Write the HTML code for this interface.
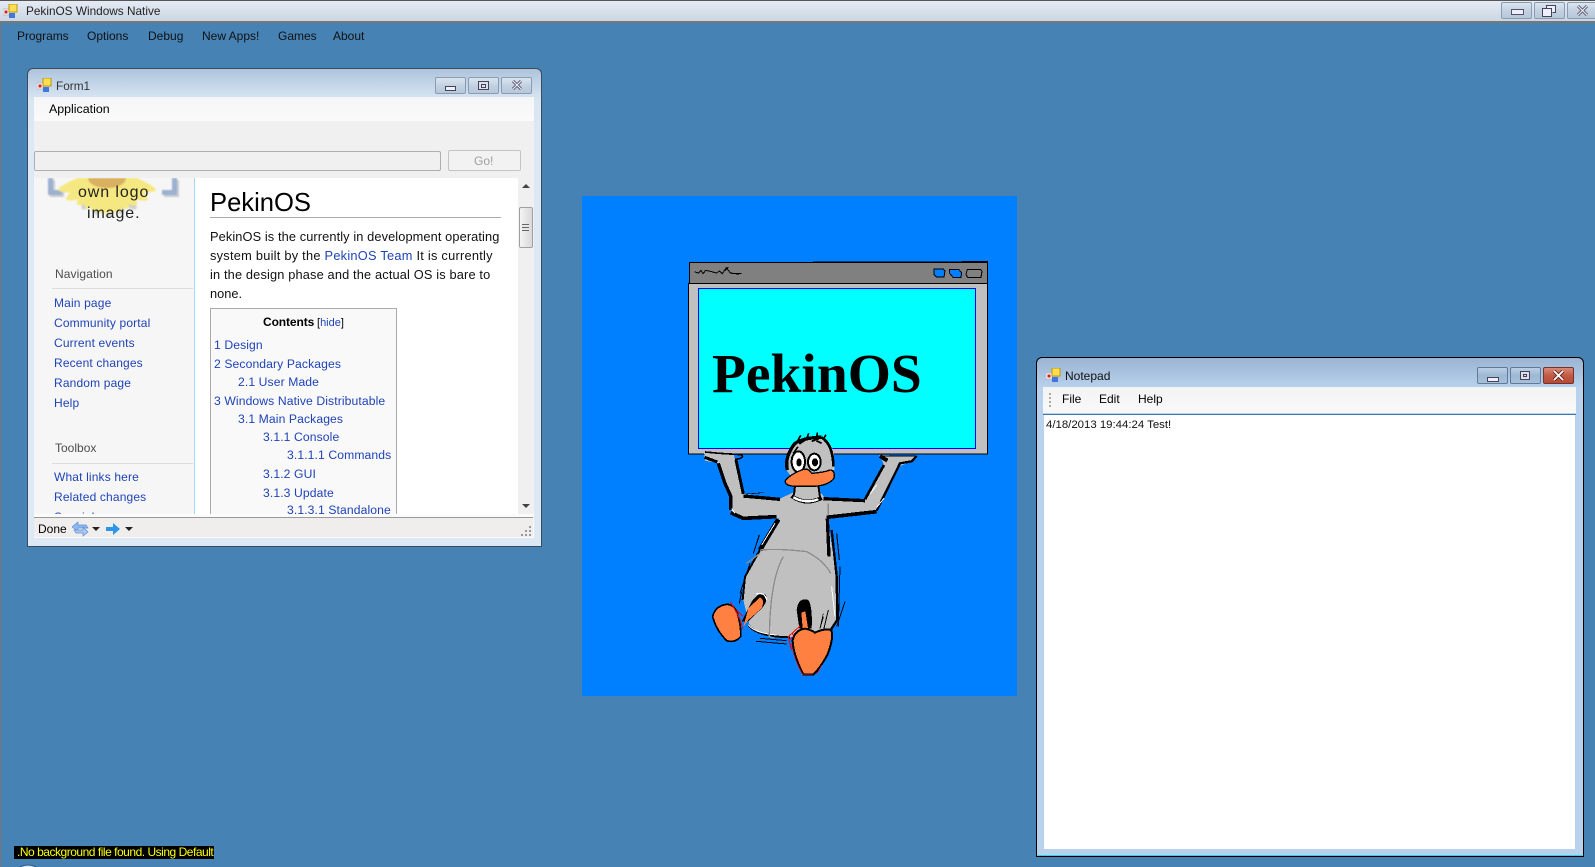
<!DOCTYPE html>
<html><head><meta charset="utf-8"><title>PekinOS Windows Native</title>
<style>
html,body{margin:0;padding:0}
body{width:1595px;height:867px;position:relative;overflow:hidden;background:#4682b4;font-family:"Liberation Sans",Arial,sans-serif;font-size:12px;color:#111}
div,span,a,svg{position:absolute}
.t{white-space:nowrap;line-height:16px}
.l{color:#1f43b8;white-space:nowrap;line-height:16px;position:absolute;letter-spacing:.15px}
.b{font-size:12.8px;line-height:19px;white-space:nowrap;color:#111;left:210px}
.b a{position:static;color:#1f43b8}
.c{font-size:12.16px;letter-spacing:.1px}
.btn{box-sizing:border-box;height:17px;width:31px;border:1px solid #8a9cb4;border-radius:2px;background:linear-gradient(#dbe5f0,#c3d2e2 50%,#b7c8da)}
.nb{background:linear-gradient(#bdd0e6,#9db7d4 50%,#a6c0dc);border-color:#607a98}
</style></head><body>

<!-- main window -->
<div style="left:0;top:0;width:1595px;height:23px;background:linear-gradient(#e4ebf3,#cbd7e3);border-top:1px solid #555;box-sizing:border-box;border-bottom:2px solid #777"></div>
<div style="left:0;top:23px;width:1px;height:844px;background:#777"></div>
<svg style="left:3px;top:4px" width="15" height="14" viewBox="0 0 15 14"><rect x="0" y="5" width="6" height="6" fill="#fff" stroke="#bbb"/><rect x="1.5" y="6.5" width="3" height="3" fill="#c22"/><rect x="6" y="0" width="8" height="8" fill="#fd5" stroke="#b90"/><rect x="6" y="9" width="6" height="5" fill="#47d"/></svg>
<span class="t" style="left:26px;top:3px;font-size:11.8px;color:#222">PekinOS Windows Native</span>
<div class="btn" style="left:1501px;top:2px"></div><div style="left:1511px;top:9px;width:11px;height:4px;border:1px solid #556;background:#eef"></div>
<div class="btn" style="left:1534px;top:2px"></div><svg style="left:1542px;top:5px" width="14" height="12"><path d="M4.5 3.5V.5h9v7h-3M.5 3.5h9v8h-9z" fill="#eef" stroke="#445"/></svg>
<div class="btn" style="left:1567px;top:2px;width:32px"></div><svg style="left:1576px;top:5px" width="13" height="11"><path d="M2 1l9 9M11 1l-9 9" stroke="#556" stroke-width="3"/><path d="M2 1l9 9M11 1l-9 9" stroke="#eef" stroke-width="1.2"/></svg>
<span class="t" style="left:17px;top:28px;letter-spacing:-.05px">Programs</span>
<span class="t" style="left:87px;top:28px">Options</span>
<span class="t" style="left:148px;top:28px">Debug</span>
<span class="t" style="left:202px;top:28px">New Apps!</span>
<span class="t" style="left:278px;top:28px">Games</span>
<span class="t" style="left:333px;top:28px">About</span>

<!-- Form1 -->
<div style="left:27px;top:68px;width:515px;height:479px;box-sizing:border-box;border:1px solid #3b4a5c;border-radius:6px 6px 0 0;background:linear-gradient(#aec4dc 0,#d8e5f2 30px,#dce8f4 60px)"></div>
<svg style="left:37px;top:78px" width="15" height="14" viewBox="0 0 15 14"><rect x="0" y="5" width="6" height="6" fill="#fff" stroke="#bbb"/><rect x="1.5" y="6.5" width="3" height="3" fill="#c22"/><rect x="6" y="0" width="8" height="8" fill="#fd5" stroke="#b90"/><rect x="6" y="9" width="6" height="5" fill="#47d"/></svg>
<span class="t" style="left:56px;top:78px;color:#333;font-size:11.8px">Form1</span>
<div class="btn" style="left:435px;top:77px"></div><div style="left:445px;top:86px;width:9px;height:3px;border:1px solid #445;background:#eef"></div>
<div class="btn" style="left:468px;top:77px"></div><div style="left:478px;top:81px;width:9px;height:7px;border:1px solid #445;background:#dde"></div><div style="left:481px;top:84px;width:3px;height:2px;border:1px solid #445"></div>
<div class="btn" style="left:501px;top:77px"></div><svg style="left:511px;top:80px" width="12" height="10"><path d="M2 1l8 8M10 1l-8 8" stroke="#556" stroke-width="3"/><path d="M2 1l8 8M10 1l-8 8" stroke="#eef" stroke-width="1.2"/></svg>
<div style="left:34px;top:97px;width:500px;height:24px;background:linear-gradient(#f6f6f6,#fafafa)"></div>
<div style="left:34px;top:121px;width:500px;height:57px;background:#f0f0f0"></div>
<span class="t" style="left:49px;top:101px;color:#000;font-size:12.4px">Application</span>
<div style="left:34px;top:151px;width:407px;height:20px;box-sizing:border-box;border:1px solid #aeaeae;border-radius:2px;background:#f0f0f0"></div>
<div style="left:448px;top:150px;width:73px;height:21px;box-sizing:border-box;border:1px solid #c4c4c4;border-radius:2px;background:#f2f2f2"></div>
<span class="t" style="left:474px;top:153px;color:#a0a0a0">Go!</span>

<!-- browser -->
<div style="left:34px;top:178px;width:500px;height:336px;overflow:hidden;background:#fff">
  <div style="left:0;top:0;width:160px;height:336px;background:#f6f6f6;border-right:1px solid #a7d7f9"></div>
  <svg style="left:0;top:0;filter:blur(.7px)" width="160" height="50">
    <g fill="#c9ccd2" transform="translate(2 2)"><path d="M14 0h5v12h9v5H14zM143 0h-5v12h-10v5h15z"/></g>
    <path d="M14 0h5v12h9v5H14zM143 0h-5v12h-10v5h15z" fill="#9db0cf"/>
    <g fill="#d2d2cc" transform="translate(2 3)">
      <path d="M62 0Q73 72 84 0z"/>
      <path d="M62 0Q73 72 84 0z" transform="rotate(-22 73 0)"/><path d="M62 0Q73 72 84 0z" transform="rotate(22 73 0)"/>
      <path d="M62 0Q73 78 84 0z" transform="rotate(-44 73 0)"/><path d="M62 0Q73 78 84 0z" transform="rotate(44 73 0)"/>
    </g>
    <g fill="#f5e880">
      <path d="M62 0Q73 72 84 0z"/>
      <path d="M62 0Q73 72 84 0z" transform="rotate(-11 73 0)"/><path d="M62 0Q73 72 84 0z" transform="rotate(11 73 0)"/>
      <path d="M62 0Q73 72 84 0z" transform="rotate(-23 73 0)"/><path d="M62 0Q73 72 84 0z" transform="rotate(23 73 0)"/>
      <path d="M62 0Q73 74 84 0z" transform="rotate(-35 73 0)"/><path d="M62 0Q73 74 84 0z" transform="rotate(35 73 0)"/>
      <path d="M62 0Q73 80 84 0z" transform="rotate(-48 73 0)"/><path d="M62 0Q73 80 84 0z" transform="rotate(48 73 0)"/>
      <path d="M62 0Q73 92 84 0z" transform="rotate(-62 73 0)"/><path d="M62 0Q73 92 84 0z" transform="rotate(62 73 0)"/>
      <path d="M62 0Q73 100 84 0z" transform="rotate(-76 73 0)"/><path d="M62 0Q73 100 84 0z" transform="rotate(76 73 0)"/>
    </g>
    <ellipse cx="73" cy="0" rx="19" ry="10" fill="#d9b060"/>
  </svg>
  <span class="t" style="left:44px;top:7px;font-size:16px;color:#222;letter-spacing:.9px">own logo</span>
  <span class="t" style="left:53px;top:28px;font-size:16px;color:#222;letter-spacing:.9px">image.</span>
  <span class="t" style="left:21px;top:88px;color:#4d4d4d;letter-spacing:.1px">Navigation</span>
  <div style="left:18px;top:110px;width:141px;height:1px;background:#ddd"></div>
  <span class="l" style="left:20px;top:117px">Main page</span>
  <span class="l" style="left:20px;top:137px">Community portal</span>
  <span class="l" style="left:20px;top:157px">Current events</span>
  <span class="l" style="left:20px;top:177px">Recent changes</span>
  <span class="l" style="left:20px;top:197px">Random page</span>
  <span class="l" style="left:20px;top:217px">Help</span>
  <span class="t" style="left:21px;top:262px;color:#4d4d4d">Toolbox</span>
  <div style="left:18px;top:285px;width:141px;height:1px;background:#ddd"></div>
  <span class="l" style="left:20px;top:291px">What links here</span>
  <span class="l" style="left:20px;top:311px">Related changes</span>
  <span class="l" style="left:20px;top:331px">Special pages</span>

  <span class="t" style="left:176px;top:9px;font-size:25.6px;line-height:32px;color:#000">PekinOS</span>
  <div style="left:176px;top:39px;width:291px;height:1px;background:#aaa"></div>
  <span class="b" style="left:176px;top:49px;letter-spacing:.1px">PekinOS is the currently in development operating</span>
  <span class="b" style="left:176px;top:68px;letter-spacing:.25px">system built by the <a>PekinOS Team</a> It is currently</span>
  <span class="b" style="left:176px;top:87px;letter-spacing:.15px">in the design phase and the actual OS is bare to</span>
  <span class="b" style="left:176px;top:106px">none.</span>
  <div style="left:176px;top:130px;width:187px;height:220px;box-sizing:border-box;border:1px solid #aaa;background:#f9f9f9"></div>
  <span class="t" style="left:229px;top:136px;font-weight:bold;color:#000;letter-spacing:-.1px">Contents</span>
  <span class="t" style="left:283px;top:137px;font-size:11px;color:#000">[<a style="position:static;color:#1f43b8">hide</a>]</span>
  <span class="l c" style="left:180px;top:159px">1 Design</span>
  <span class="l c" style="left:180px;top:178px">2 Secondary Packages</span>
  <span class="l c" style="left:204px;top:196px">2.1 User Made</span>
  <span class="l c" style="left:180px;top:215px">3 Windows Native Distributable</span>
  <span class="l c" style="left:204px;top:233px">3.1 Main Packages</span>
  <span class="l c" style="left:229px;top:251px">3.1.1 Console</span>
  <span class="l c" style="left:253px;top:269px">3.1.1.1 Commands</span>
  <span class="l c" style="left:229px;top:288px">3.1.2 GUI</span>
  <span class="l c" style="left:229px;top:307px">3.1.3 Update</span>
  <span class="l c" style="left:253px;top:324px">3.1.3.1 Standalone</span>
  <!-- scrollbar -->
  <div style="left:484px;top:0;width:16px;height:336px;background:#f0f0f0"></div>
  <div style="left:485px;top:29px;width:14px;height:41px;box-sizing:border-box;border:1px solid #a0a0a0;border-radius:2px;background:linear-gradient(90deg,#f4f4f4,#d8d8d8)"></div>
  <div style="left:488px;top:46px;width:7px;height:7px;background:repeating-linear-gradient(#666 0 1px,#e8e8e8 1px 3px)"></div>
  <svg style="left:488px;top:5px" width="8" height="6"><path d="M4 1L8 5H0z" fill="#444"/></svg>
  <svg style="left:488px;top:325px" width="8" height="6"><path d="M4 5L8 1H0z" fill="#444"/></svg>
</div>

<!-- status bar -->
<div style="left:34px;top:514px;width:500px;height:24px;background:#fbfbfb"></div>
<div style="left:34px;top:517px;width:499px;height:20px;box-sizing:border-box;border-top:1px solid #999;background:#f0eded"></div>
<span class="t" style="left:38px;top:521px;color:#000">Done</span>
<svg style="left:72px;top:521px" width="64" height="16">
  <path d="M0 6l6-5v3h8l2 3H6v3z" fill="#8fb8ee" stroke="#5d8fd6" stroke-width=".7"/>
  <path d="M16 11l-5 4v-3H4l-2-3h9V6z" fill="#a9c8f2" stroke="#5d8fd6" stroke-width=".7"/>
  <path d="M20 6h8l-4 4z" fill="#222"/>
  <path d="M34 6h7V2l7 6-7 6v-4h-7z" fill="#2d96e8"/>
  <path d="M53 6h8l-4 4z" fill="#222"/>
</svg>
<svg style="left:521px;top:526px" width="11" height="10" fill="#999"><rect x="8" y="0" width="2" height="2"/><rect x="4" y="4" width="2" height="2"/><rect x="8" y="4" width="2" height="2"/><rect x="0" y="8" width="2" height="2"/><rect x="4" y="8" width="2" height="2"/><rect x="8" y="8" width="2" height="2"/></svg>

<!-- duck image -->
<div style="left:582px;top:196px;width:435px;height:500px;background:#007fff"></div>
<svg style="left:0;top:0" width="1595" height="867" shape-rendering="crispEdges">
 <g transform="translate(660 240) scale(.33333)">
  <path d="M88 68L982 65V642H85V130H88z" fill="#c0c0c0" stroke="#000" stroke-width="3"/>
  <rect x="88" y="67" width="894" height="63" fill="#808080" stroke="#000" stroke-width="3"/>
  <rect x="115" y="146" width="831" height="479" fill="#00ffff" stroke="#0000ff" stroke-width="3"/>
  <path d="M103 95l12 4 8-8 6 10 8-10 18 4 14 4 10-6 8 8 12-18 12 16 16 2 10 2M115 100l8-8M195 92l10-10M215 100h30" fill="none" stroke="#000" stroke-width="3"/>
  <path d="M822 87h28l5 6-3 18h-22l-8-8z M868 88h28l9 10-2 14h-24l-10-12z" fill="#007fff" stroke="#000" stroke-width="3"/>
  <path d="M922 88h40l4 6-3 18h-40l-5-8z" fill="#808080" stroke="#000" stroke-width="3"/>
 </g>
 <g transform="translate(680 420) scale(.33333)">
  <!-- body -->
  <path d="M72 95L160 100 195 222 300 236 345 215 418 215 440 238 550 240 610 130 598 105 710 108 695 124 655 140 590 272 442 290 470 470 470 600 445 640 330 652 270 652 210 622 190 540 190 480 238 390 298 296 190 295 155 275 150 220 115 130 75 122z" fill="#c0c0c0"/>
  <g fill="none" stroke="#000">
   <!-- left hand -->
   <path d="M75 96L118 100 185 104M185 104Q195 115 165 118" stroke-width="5"/>
   <path d="M74 112L112 126" stroke-width="9"/>
   <path d="M115 130L135 190 152 228 152 270" stroke-width="10"/>
   <path d="M152 278L190 295 290 290" stroke-width="11"/>
   <path d="M168 120L190 222" stroke-width="9"/>
   <path d="M190 228L300 238" stroke-width="10"/>
   <path d="M200 222L250 218" stroke-width="2"/>
   <!-- right arm -->
   <path d="M430 236L555 242" stroke-width="10"/>
   <path d="M555 238L612 135" stroke-width="8"/>
   <path d="M600 108L622 122" stroke-width="12"/>
   <path d="M600 108L710 108" stroke-width="3"/>
   <path d="M710 108L695 124 660 130 590 272" stroke-width="7"/>
   <path d="M590 275L440 292" stroke-width="11"/>
   <!-- body sides -->
   <path d="M295 298L240 390" stroke-width="14"/>
   <path d="M240 390L195 470 188 540" stroke-width="6"/>
   <path d="M442 295L447 410" stroke-width="10"/>
   <path d="M455 330L470 470 472 600 445 640" stroke-width="7"/>
   <path d="M205 615Q230 650 330 652" stroke-width="6"/>
   <path d="M228 664L320 672M240 655L320 662M480 440L475 620M495 545L470 620M185 515L178 550M238 345L220 400M210 430L180 520M470 340L478 420M430 590L420 625M445 570L432 625" stroke-width="3"/>
  </g>
  <g fill="none" stroke="#fff" stroke-width="3">
   <path d="M245 375L285 310M155 265L165 280M455 500L465 590M205 615Q225 640 290 645M570 222L590 195M590 262L612 235"/>
  </g>
  <path d="M240 390Q300 385 380 395 430 420 452 460M310 410Q270 480 268 650M200 430L240 400M445 250V285" fill="none" stroke="#8c8c8c" stroke-width="4"/>
  <!-- neck -->
  <path d="M345 197L342 228Q380 250 420 232L415 197z" fill="#c0c0c0"/>
  <path d="M335 228Q375 258 425 234" fill="none" stroke="#000" stroke-width="12"/>
  <path d="M340 232Q375 252 415 238" fill="none" stroke="#fff" stroke-width="7"/>
  <path d="M345 197L342 225M415 197L420 232" stroke="#000" stroke-width="6" fill="none"/>
  <!-- head -->
  <path d="M318 130Q320 95 345 68 375 50 425 50 458 70 462 105L464 150 330 165Q316 150 318 130z" fill="#c0c0c0"/>
  <path d="M322 150Q313 110 345 70 375 52 425 52" fill="none" stroke="#000" stroke-width="10"/>
  <path d="M425 52Q460 75 460 140" fill="none" stroke="#000" stroke-width="8"/>
  <path d="M350 68l12-22M380 56l6-16M410 55l2-18M430 58l8-14M358 72l24-16M395 64l22-8M425 70l-16-8M340 100l14-20" stroke="#000" stroke-width="5"/>
  <ellipse cx="355" cy="125" rx="20" ry="31" fill="#fff" stroke="#000" stroke-width="6"/>
  <ellipse cx="403" cy="126" rx="19" ry="25" fill="#fff" stroke="#000" stroke-width="6"/>
  <ellipse cx="357" cy="127" rx="8" ry="12" fill="#000"/>
  <ellipse cx="405" cy="127" rx="9" ry="12" fill="#000"/>
  <path d="M316 182Q328 165 365 150 385 142 395 160 430 158 450 150 466 150 462 175 445 197 400 199H345Q313 197 316 182z" fill="#ff8040" stroke="#000" stroke-width="4"/>
  <!-- legs / feet -->
  <path d="M185 605L215 545Q240 510 258 525 265 550 235 575L205 605z" fill="#000"/>
  <path d="M190 620L205 565 240 532Q255 540 245 565L205 600z" fill="#ff8040"/>
  <path d="M228 522Q255 515 260 540" fill="none" stroke="#fff" stroke-width="4"/>
  <path d="M98 590Q105 558 140 553 162 553 172 580 184 620 182 650 165 670 140 662 108 630 98 590z" fill="#ff8040" stroke="#000" stroke-width="5"/>
  <path d="M150 545l8 12 22 40 8 30M170 570l18 18" fill="none" stroke="#f00" stroke-width="3"/>
  <path d="M350 570Q355 530 385 540 398 560 395 625H358z" fill="#000"/>
  <path d="M364 578l12-4 8 50h-16z" fill="#ff8040"/>
  <path d="M430 580l-10 45" stroke="#000" stroke-width="2"/>
  <path d="M325 650l35-32M325 650l10 40M325 660l25-15M335 640l15 15M330 680l10-15" fill="none" stroke="#f00" stroke-width="3"/>
  <path d="M338 660Q345 630 375 626 395 630 405 638 430 625 454 630 462 655 442 705 420 745 400 764H370Q338 700 338 660z" fill="#ff8040" stroke="#000" stroke-width="6"/>
  <path d="M336 680Q345 725 368 764h30M410 762l15-25" fill="none" stroke="#f00" stroke-width="2"/>
 </g>
 <text x="712" y="392" font-family="Liberation Serif" font-weight="bold" font-size="55.5" fill="#000" shape-rendering="auto">PekinOS</text>
</svg>

<!-- Notepad -->
<div style="left:1036px;top:357px;width:548px;height:500px;box-sizing:border-box;border:1px solid #000;border-radius:6px 6px 0 0;background:linear-gradient(#9ab4d2 0,#b8d1ec 30px)"></div>
<div style="left:1037px;top:855px;width:546px;height:1px;background:#38d0e0"></div>
<svg style="left:1046px;top:368px" width="15" height="14" viewBox="0 0 15 14"><rect x="0" y="5" width="6" height="6" fill="#fff" stroke="#bbb"/><rect x="1.5" y="6.5" width="3" height="3" fill="#c22"/><rect x="6" y="0" width="8" height="8" fill="#fd5" stroke="#b90"/><rect x="6" y="9" width="6" height="5" fill="#47d"/></svg>
<span class="t" style="left:1065px;top:368px;color:#111">Notepad</span>
<div class="btn nb" style="left:1477px;top:367px"></div><div style="left:1487px;top:377px;width:10px;height:3px;border:1px solid #445;background:#eef"></div>
<div class="btn nb" style="left:1510px;top:367px"></div><div style="left:1520px;top:371px;width:8px;height:7px;border:1px solid #445;background:#dde"></div><div style="left:1523px;top:374px;width:2px;height:1px;border:1px solid #445"></div>
<div class="btn" style="left:1543px;top:367px;background:linear-gradient(#d98a78,#c25a45 50%,#b84a36);border-color:#74332a"></div><svg style="left:1552px;top:370px" width="13" height="11"><path d="M2 1l9 9M11 1l-9 9" stroke="#5a2018" stroke-width="3.5"/><path d="M2 1l9 9M11 1l-9 9" stroke="#fff" stroke-width="1.8"/></svg>
<div style="left:1043px;top:387px;width:533px;height:26px;background:linear-gradient(#f3f3f3,#f9f9f9)"></div>
<div style="left:1049px;top:393px;width:2px;height:14px;background:repeating-linear-gradient(#aaa 0 2px,transparent 2px 4px)"></div>
<span class="t" style="left:1062px;top:391px;color:#000">File</span>
<span class="t" style="left:1099px;top:391px;color:#000">Edit</span>
<span class="t" style="left:1138px;top:391px;color:#000">Help</span>
<div style="left:1043px;top:414px;width:533px;height:1px;background:#3b78ad"></div>
<div style="left:1044px;top:415px;width:531px;height:434px;background:#fff"></div>
<span class="t" style="left:1046px;top:417px;color:#111;font-size:11.4px">4/18/2013 19:44:24 Test!</span>

<!-- message -->
<div style="left:14px;top:846px;width:200px;height:13px;background:#000"></div>
<span class="t" style="left:17px;top:845px;color:#ff0;line-height:15px;font-size:12px;letter-spacing:-.48px">.No background file found. Using Default</span>
<svg style="left:19px;top:864px" width="18" height="3"><path d="M1 3Q9-1 17 3" fill="#cfe0f2" stroke="#2a5a90"/></svg>
</body></html>
